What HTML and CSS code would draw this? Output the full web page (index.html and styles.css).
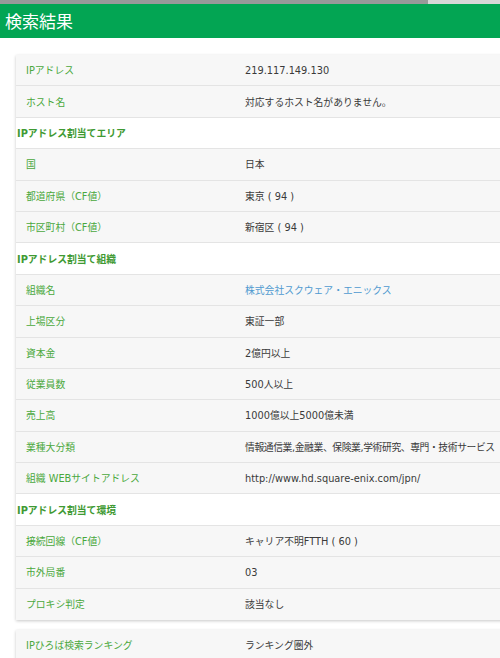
FILE: index.html
```html
<!DOCTYPE html>
<html lang="ja">
<head>
<meta charset="utf-8">
<link rel="stylesheet" href="styles.css">
</head>
<body>
<div class="topstrip"><span class="topstrip-dark"></span></div>
<header class="title">検索結果</header>
<main class="content">
  <section class="card">
    <div class="row"><span class="label">IPアドレス</span><span class="value">219.117.149.130</span></div>
    <div class="row"><span class="label">ホスト名</span><span class="value">対応するホスト名がありません。</span></div>
    <div class="row section">IPアドレス割当てエリア</div>
    <div class="row"><span class="label">国</span><span class="value">日本</span></div>
    <div class="row"><span class="label">都道府県（CF値）</span><span class="value">東京 ( 94 )</span></div>
    <div class="row"><span class="label">市区町村（CF値）</span><span class="value">新宿区 ( 94 )</span></div>
    <div class="row section">IPアドレス割当て組織</div>
    <div class="row"><span class="label">組織名</span><span class="value link">株式会社スクウェア・エニックス</span></div>
    <div class="row"><span class="label">上場区分</span><span class="value">東証一部</span></div>
    <div class="row"><span class="label">資本金</span><span class="value">2億円以上</span></div>
    <div class="row"><span class="label">従業員数</span><span class="value">500人以上</span></div>
    <div class="row"><span class="label">売上高</span><span class="value">1000億以上5000億未満</span></div>
    <div class="row"><span class="label">業種大分類</span><span class="value tight">情報通信業,金融業、保険業,学術研究、専門・技術サービス</span></div>
    <div class="row"><span class="label">組織 WEBサイトアドレス</span><span class="value">http://www.hd.square-enix.com/jpn/</span></div>
    <div class="row section">IPアドレス割当て環境</div>
    <div class="row"><span class="label">接続回線（CF値）</span><span class="value">キャリア不明FTTH ( 60 )</span></div>
    <div class="row"><span class="label">市外局番</span><span class="value">03</span></div>
    <div class="row last"><span class="label">プロキシ判定</span><span class="value">該当なし</span></div>
  </section>
  <section class="card">
    <div class="row"><span class="label">IPひろば検索ランキング</span><span class="value">ランキング圏外</span></div>
  </section>
</main>
</body>
</html>
```
FILE: styles.css
```css
html, body {
  margin: 0;
  padding: 0;
  background: #fff;
  overflow: hidden;
  width: 500px;
  height: 658px;
}
body {
  font-family: "DejaVu Sans", "Noto Sans CJK JP", sans-serif;
  font-size: 9.8px;
  color: #333;
}
.topstrip {
  height: 4px;
  background: #d8d8d8;
  display: flex;
}
.topstrip-dark {
  width: 428px;
  background: #999;
}
.title {
  background: #03a553;
  color: #fff;
  height: 34px;
  line-height: 33px;
  font-family: "Noto Sans CJK JP", sans-serif;
  font-size: 17px;
  padding-left: 5px;
}
.content {
  padding: 17px 0 0 16px;
  display: flex;
  flex-direction: column;
  gap: 10px;
}
.card {
  width: 520px;
  background: #f7f7f7;
  box-shadow: 0 1px 3px rgba(0, 0, 0, 0.22);
  display: flex;
  flex-direction: column;
}
.row {
  height: 31.4px;
  box-sizing: border-box;
  border-bottom: 1px solid #e4e4e4;
  display: grid;
  grid-template-columns: 219px 1fr;
  align-items: center;
  padding-left: 10px;
  white-space: nowrap;
}
.row.last {
  border-bottom: none;
}
.label {
  color: #4aa83c;
}
.value {
  color: #3a3a3a;
}
.value.tight {
  letter-spacing: -0.4px;
}
.value.link {
  color: #4f9ad0;
}
.section {
  display: flex;
  background: #fff;
  padding-left: 1px;
  color: #3f9a33;
  font-weight: bold;
}
```
